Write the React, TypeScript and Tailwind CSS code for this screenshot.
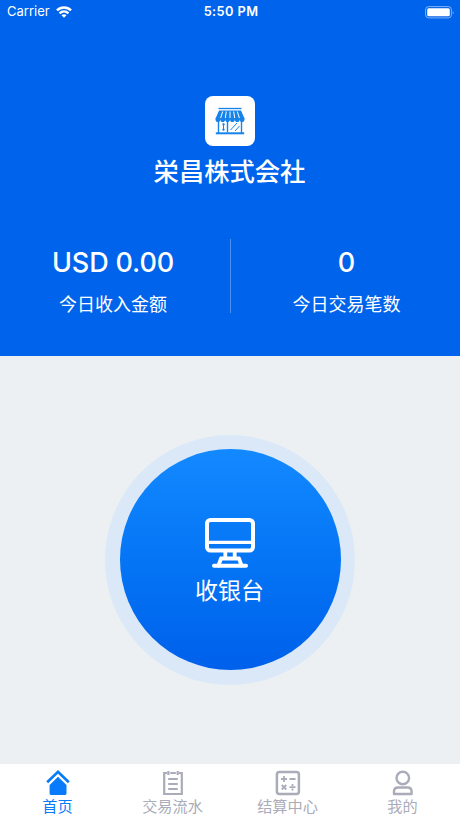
import type { ReactNode } from "react";

const cjk = "font-['Noto_Sans_CJK_SC',sans-serif]";

function WifiIcon() {
  return (
    <svg className="ml-[6px] h-[12px] w-[16px]" viewBox="0 0 16 12" fill="none" stroke="#fff" strokeWidth="2.5">
      <path d="M1 4.400C5 .5 11 .5 15 4.400" />
      <path d="M3.600 7.300c2.500-2.400 6.300-2.400 8.800 0" />
      <path d="M8 11.700 5.500 9.200c1.400-1.300 3.600-1.300 5 0Z" fill="#fff" stroke="none" />
    </svg>
  );
}

function BatteryIcon() {
  return (
    <svg className="h-[13px] w-[30px]" viewBox="0 0 30 13" fill="none">
      <rect x=".6" y=".6" width="25.800" height="11.300" rx="3" stroke="#fff" strokeOpacity=".5" />
      <rect x="2.200" y="2.200" width="22.600" height="8.100" rx="1.500" fill="#fff" />
      <path d="M27.800 4.500q1.500 2 0 4Z" fill="#fff" fillOpacity=".55" />
    </svg>
  );
}

function StoreIcon() {
  return (
    <svg className="h-[30px] w-[32px]" viewBox="0 0 32 30" fill="none" stroke="#1683ea">
      <path d="M4.500 2.500h23" strokeWidth="1.300" />
      <path d="M5 4.500h22l3.500 8H1.500Z" fill="#1683ea" stroke="none" />
      <path d="M1.500 12h4.830v1.200a2.410 2.800 0 0 1-4.830 0Zm4.830 0h4.830v1.200a2.410 2.800 0 0 1-4.830 0Zm4.830 0H16v1.200a2.410 2.800 0 0 1-4.830 0ZM16 12h4.830v1.200a2.410 2.800 0 0 1-4.830 0Zm4.830 0h4.830v1.200a2.410 2.800 0 0 1-4.830 0Zm4.830 0h4.830v1.200a2.410 2.800 0 0 1-4.830 0Z" fill="#1683ea" stroke="none" />
      <path d="M8.700 5.500 6.600 12M12.300 5.500l-1 6.500M16 5.500V12M19.700 5.500l1 6.500M23.300 5.500l2.100 6.500" stroke="#fff" strokeWidth="1" />
      <path d="M4.500 15v12M13.500 15.500v11M27.500 15v12" strokeWidth="1.400" />
      <path d="M9.500 17.500v7" strokeWidth="1" />
      <path d="M9.500 17.500v1.700M9.500 22.800v1.700" strokeWidth="2.200" />
      <path d="m16.500 24 6.500-7M21 25l4.500-5" strokeWidth="1" />
      <path d="M1.800 27.300h28.400" strokeWidth="2" />
    </svg>
  );
}

function MonitorIcon() {
  return (
    <svg className="h-[50px] w-[50px]" viewBox="0 0 50 50" fill="none" stroke="#fff" strokeLinecap="round" strokeLinejoin="round">
      <rect x="2" y="2" width="46" height="30.500" rx="3.500" strokeWidth="4" />
      <path d="M3 24.300h44" strokeWidth="3.200" />
      <path d="M20.300 34v5M29.700 34v5M16 40.500h18l2.500 7M16 40.500l-2.500 7" strokeWidth="3.800" />
      <path d="M9 47.800h32" strokeWidth="4" />
    </svg>
  );
}

function Stat({ value, label }: { value: string; label: string }) {
  return (
    <div className="flex flex-col items-center pt-[8px]">
      <div className="text-[27px] leading-[32px] font-medium tracking-[-.15px]">{value}</div>
      <div className={`mt-[11px] text-[18px] leading-[26px] ${cjk}`}>{label}</div>
    </div>
  );
}

function Tab({ label, active, children }: { label: string; active?: boolean; children: ReactNode }) {
  return (
    <button className={`flex w-[115px] flex-col items-center pt-[6px] ${active ? "text-[#087bfa]" : "text-[#aaacb9]"}`}>
      <svg className="h-[26px] w-[26px]" viewBox="0 0 26 26" fill="none" stroke="currentColor">
        {children}
      </svg>
      <span className={`-mt-[2px] text-[15.200px] leading-[22px] ${cjk}`}>{label}</span>
    </button>
  );
}

export default function App() {
  return (
    <div className="flex h-[818px] w-[460px] flex-col overflow-hidden bg-[#ecf0f3] font-['Inter','Noto_Sans_CJK_SC',sans-serif] text-white">
      <header className="h-[356px] shrink-0 bg-[#0063eb]">
        <div className="flex h-[24px] items-center justify-between pr-[5px] pl-[7px]">
          <div className="flex w-[150px] items-center text-[13px]">
            Carrier
            <WifiIcon />
          </div>
          <div className="text-[12.800px] font-semibold tracking-[.4px]">5:50 PM</div>
          <div className="flex w-[150px] justify-end">
            <BatteryIcon />
          </div>
        </div>
        <div className="mt-[72px] flex flex-col items-center">
          <div className="flex h-[50px] w-[50px] items-center justify-center rounded-[8px] bg-white">
            <StoreIcon />
          </div>
          <h1 className="mt-[6px] pr-px font-['Noto_Sans_CJK_JP',sans-serif] text-[25.300px] leading-[36px] font-medium">栄昌株式会社</h1>
        </div>
        <div className="mt-[51px] flex h-[74px]">
          <div className="flex w-[230px] justify-center pr-[4px]">
            <Stat value="USD 0.00" label="今日收入金额" />
          </div>
          <div className="w-px bg-white/30" />
          <div className="flex w-[229px] justify-center pl-[2px]">
            <Stat value="0" label="今日交易笔数" />
          </div>
        </div>
      </header>
      <main className="flex h-[408px] shrink-0 items-center justify-center">
        <button className="flex h-[250px] w-[250px] items-start justify-center rounded-full bg-[#dae8f7] pt-[14px]">
          <span className="flex h-[221px] w-[221px] flex-col items-center rounded-full bg-linear-to-b from-[#1389ff] to-[#0060eb] pt-[69px]">
            <MonitorIcon />
            <span className={`mt-[4px] pr-px text-[23px] leading-[34px] ${cjk}`}>收银台</span>
          </span>
        </button>
      </main>
      <nav className="flex h-[54px] shrink-0 bg-white">
        <Tab label="首页" active>
          <path d="m2.200 12.300 10.800-10.400 10.800 10.400" strokeWidth="2.700" />
          <path d="M13 6.800 21.500 15v8.600q0 1.400-1.400 1.400H6Q4.600 25 4.600 23.600V15Z" fill="currentColor" stroke="none" />
        </Tab>
        <Tab label="交易流水">
          <path d="M7 3H4.200v21h17.600V3H19M10.300 3h5.500" strokeWidth="2.200" />
          <path d="M8.400 1v4M17.700 1v4M8.200 9h9.600M8.200 14h9.600M8.200 19h9.600" strokeWidth="2.200" />
        </Tab>
        <Tab label="结算中心">
          <rect x="1.900" y="2" width="22" height="22" rx="2.500" strokeWidth="2.500" />
          <path d="M6 9h6M9 6v6M14.500 9h6M6.800 15l4.500 4.500M11.300 15l-4.500 4.500M14.500 17.200h6" strokeWidth="1.800" />
          <path d="M17.500 14v2M17.500 18.500v2" strokeWidth="1.800" />
        </Tab>
        <Tab label="我的">
          <circle cx="12.800" cy="8" r="6.300" strokeWidth="2.400" />
          <path d="M4 24v-2.500Q4 17.500 8.200 17.500h9.200q4.200 0 4.200 4V24Z" strokeWidth="2.400" strokeLinejoin="round" />
        </Tab>
      </nav>
    </div>
  );
}
